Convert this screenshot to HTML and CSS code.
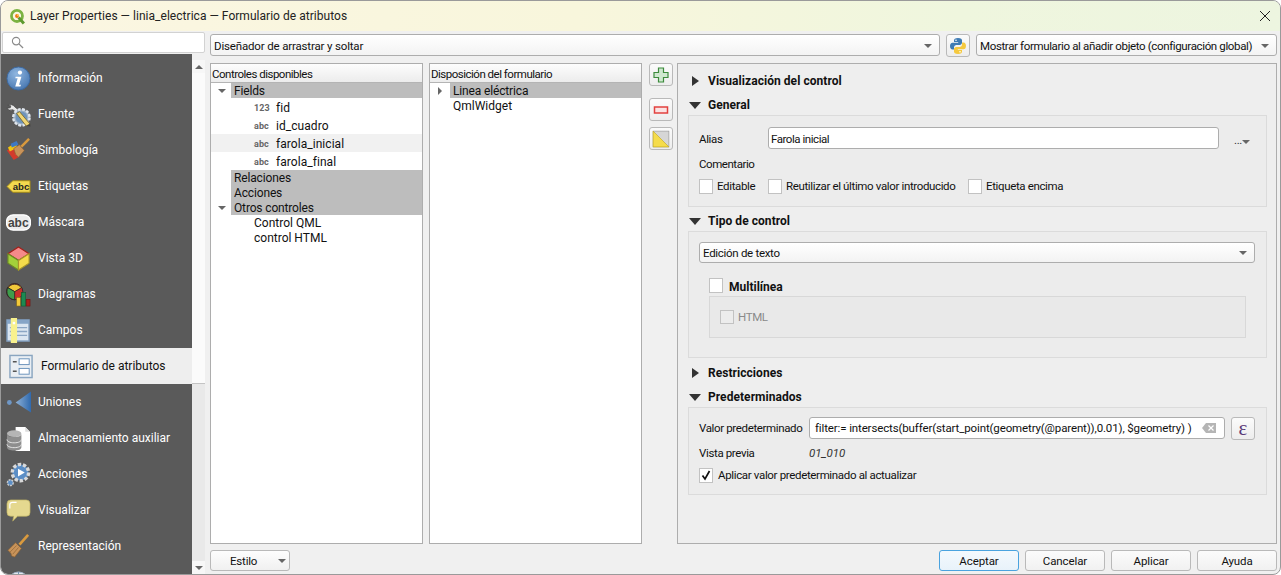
FILE: index.html
```html
<!DOCTYPE html>
<html lang="es">
<head>
<meta charset="utf-8">
<title>Layer Properties</title>
<link rel="stylesheet" href="styles.css">
</head>
<body>
<div class="window">
  <header class="titlebar">
    <svg class="qgis" viewBox="0 0 16 16"><circle cx="7.500" cy="7.500" r="5.200" fill="none" stroke="#7cb342" stroke-width="2.600"/><path d="M9 9l5 5.500" stroke="#5d9a2e" stroke-width="2.800"/><circle cx="7.500" cy="7.500" r="1.800" fill="#ee7913"/><path d="M7.500 5.700a1.800 1.800 0 0 1 1.800 1.800H7.500z" fill="#f5c242"/></svg>
    <span class="title-text">Layer Properties — linia_electrica — Formulario de atributos</span>
    <svg class="close" viewBox="0 0 12 12"><path d="M1 1l10 10M11 1L1 11" stroke="#222" stroke-width="1" fill="none"/></svg>
  </header>
  <div class="content">
    <aside class="left">
      <div class="search">
        <svg class="search-icon" viewBox="0 0 14 14"><circle cx="5.500" cy="5.500" r="4" fill="none" stroke="#8a8a8a" stroke-width="1.200"/><path d="M8.500 8.500l4.500 4.500" stroke="#8a8a8a" stroke-width="1.400"/></svg>
      </div>
      <div class="side-wrap">
        <nav class="sidebar">
          <div class="item">
            <svg class="icon" viewBox="0 0 26 26"><defs><radialGradient id="bl" cx=".4" cy=".3" r=".8"><stop offset="0" stop-color="#8fb6e0"/><stop offset="1" stop-color="#4272ad"/></radialGradient></defs><circle cx="13" cy="13" r="12" fill="url(#bl)" stroke="#3b689f"/><circle cx="14.500" cy="6.800" r="2.200" fill="#fff"/><path d="M10 11.200h6l-2.400 8.400h2l-.6 1.600H9.600l2.500-8.400h-2.400z" fill="#fff"/></svg>
            <span>Información</span>
          </div>
          <div class="item">
            <svg class="icon" viewBox="0 0 26 26"><path d="M2 3.500a5 5 0 0 1 7 1.500l5 4-2 2.500-5-3.500a5 5 0 0 1-6-1.500l3.500-.5.500-2z" fill="#e8e8e8" stroke="#444" stroke-width=".7"/><circle cx="16" cy="16" r="8.500" fill="#9fb2c6" stroke="#dfe5ec" stroke-width="2.500" stroke-dasharray="3 1.500"/><circle cx="16" cy="16" r="6" fill="#6f94bb"/><path d="M11 12l3-2 11 13-4 2z" fill="#f0d675" stroke="#6b5a22" stroke-width=".8"/><path d="M21 25l4-2 .5 2.500z" fill="#444"/></svg>
            <span>Fuente</span>
          </div>
          <div class="item">
            <svg class="icon" viewBox="0 0 26 26"><path d="M1 13l8-5 4 12-5 3z" fill="#d33b2c"/><path d="M2 10l8-5 2 5-8 4z" fill="#f1c40f"/><path d="M5 6l6-3 2 4-7 3z" fill="#3d78c4"/><path d="M8 11l6-4 5 6-6 7-3-3z" fill="#c8935a" stroke="#8c6233" stroke-width=".7"/><path d="M16 9l8-8" stroke="#d99a3e" stroke-width="2.600"/></svg>
            <span>Simbología</span>
          </div>
          <div class="item">
            <svg class="icon" viewBox="0 0 26 26"><path d="M1 13l6-6h18v12H7z" fill="#f3d94e" stroke="#a48a17"/><text x="7" y="17" class="abc-dark">abc</text></svg>
            <span>Etiquetas</span>
          </div>
          <div class="item">
            <svg class="icon" viewBox="0 0 26 26"><rect x="0.500" y="5" width="25" height="16" rx="7" fill="#ececec" stroke="#fff" stroke-width="1.200"/><text x="2" y="18" class="abc-big">abc</text></svg>
            <span>Máscara</span>
          </div>
          <div class="item">
            <svg class="icon" viewBox="0 0 26 26"><path d="M13 1l11 7-11 7L2 8z" fill="#f58a8a" stroke="#a3201a" stroke-width="1.200"/><path d="M2 8l11 7v10L2 18z" fill="#a3d13a" stroke="#6d8a26" stroke-width="1.200"/><path d="M24 8l-11 7v10l11-7z" fill="#f5dc4b" stroke="#a8962a" stroke-width="1.200"/></svg>
            <span>Vista 3D</span>
          </div>
          <div class="item">
            <svg class="icon" viewBox="0 0 26 26"><circle cx="9" cy="10" r="8.500" fill="#c9302c" stroke="#222" stroke-width=".8"/><path d="M9 10L2 6a8.500 8.500 0 0 1 14 0z" fill="#f3c93a" stroke="#222" stroke-width=".8"/><path d="M9 10v8.500A8.500 8.500 0 0 1 2 6z" fill="#3e9d4b" stroke="#222" stroke-width=".8"/><rect x="11" y="16" width="4" height="9" fill="#f3c93a" stroke="#7d6414" stroke-width=".6"/><rect x="16" y="11" width="4.500" height="14" fill="#1c8a52" stroke="#0f5a33" stroke-width=".6"/><rect x="21" y="18" width="4" height="7" fill="#a8201c" stroke="#6f1512" stroke-width=".6"/></svg>
            <span>Diagramas</span>
          </div>
          <div class="item">
            <svg class="icon" viewBox="0 0 26 26"><rect x="1" y="2" width="23" height="22" fill="#dbe6f1" stroke="#7f9cbc" stroke-width="1.500"/><rect x="1" y="2" width="23" height="4" fill="#86a5c7"/><path d="M11 10h11M11 14h11M11 18h11M4 10h4M4 14h4M4 18h4" stroke="#8ba6c4" stroke-width="1.400"/><rect x="5" y="0" width="6.500" height="26" fill="#f8f18e"/><rect x="7" y="4" width="2.500" height="2.500" fill="#fff"/></svg>
            <span>Campos</span>
          </div>
          <div class="item selected">
            <svg class="icon" viewBox="0 0 26 26"><rect x="1" y="1.500" width="23" height="23" fill="#e9eef3" stroke="#8aa5c0" stroke-width="1.500"/><rect x="10.500" y="5" width="10.500" height="6" fill="#fff" stroke="#6a92bb"/><rect x="10.500" y="15" width="10.500" height="6" fill="#fff" stroke="#6a92bb"/><path d="M4 8h4M4 18h4" stroke="#555" stroke-width="1.500"/></svg>
            <span>Formulario de atributos</span>
          </div>
          <div class="item">
            <svg class="icon" viewBox="0 0 26 26"><defs><linearGradient id="jn" x1="0" x2="1"><stop offset="0" stop-color="#8db0d6"/><stop offset="1" stop-color="#2f69ad"/></linearGradient></defs><circle cx="3.500" cy="13" r="2.500" fill="#6f97c6"/><path d="M26 1.500V23.500L10 13z" fill="url(#jn)"/></svg>
            <span>Uniones</span>
          </div>
          <div class="item">
            <svg class="icon" viewBox="0 0 26 26"><path d="M10 1h10l5 5v20H10z" fill="#fff"/><path d="M20 1v5h5" fill="#ddd"/><ellipse cx="8.500" cy="8" rx="7.500" ry="3.500" fill="#b5b5b5"/><path d="M1 8v14c0 2 3 3.500 7.500 3.500S16 24 16 22V8c0 2-3 3.500-7.500 3.500S1 10 1 8z" fill="#8e8e8e"/><path d="M1 14c0 2 3 3.500 7.500 3.500S16 16 16 14M1 19c0 2 3 3.500 7.500 3.500S16 21 16 19" fill="none" stroke="#e6e6e6"/></svg>
            <span>Almacenamiento auxiliar</span>
          </div>
          <div class="item">
            <svg class="icon" viewBox="0 0 26 26"><circle cx="15" cy="11" r="8.500" fill="#5b8ec6" stroke="#d9d9d9" stroke-width="3.500" stroke-dasharray="3.500 1.800"/><path d="M12.500 7l7 4-7 4z" fill="#fff"/><circle cx="4.500" cy="21.500" r="3" fill="#5b8ec6" stroke="#ccc" stroke-width="1.500" stroke-dasharray="2 1"/></svg>
            <span>Acciones</span>
          </div>
          <div class="item">
            <svg class="icon" viewBox="0 0 26 26"><path d="M5 2h16a4 4 0 0 1 4 4v9a4 4 0 0 1-4 4H12l-5 5 1-5H5a4 4 0 0 1-4-4V6a4 4 0 0 1 4-4z" fill="#e5d88f" stroke="#bcae5f" stroke-width=".7"/><path d="M4 11V7a2.500 2.500 0 0 1 2.500-2.500H11" fill="none" stroke="#fff" stroke-width="1.200"/></svg>
            <span>Visualizar</span>
          </div>
          <div class="item">
            <svg class="icon" viewBox="0 0 26 26"><path d="M2 17l8-8 6 6-7 9-3-1-1-3z" fill="#c8935a" stroke="#8c6233" stroke-width=".7"/><path d="M4 19l7-7M7 21l6-7" stroke="#8c6233" stroke-width=".7"/><path d="M14 11l9-10" stroke="#d99a3e" stroke-width="2.800"/></svg>
            <span>Representación</span>
          </div>
          <div class="item">
            <svg class="icon" viewBox="0 0 26 26"><circle cx="13" cy="13" r="11" fill="#e4e9ef" stroke="#9fb2c6"/><path d="M13 2v22M2 13h22M5 6h16" stroke="#6f8fb0"/></svg>
            <span></span>
          </div>
        </nav>
        <div class="vscroll">
          <div class="sbtn"><i class="tri-up"></i></div>
          <div class="thumb"></div>
          <div class="track"></div>
          <div class="sbtn"><i class="tri-down"></i></div>
        </div>
      </div>
    </aside>
    <main class="main">
      <div class="toprow">
        <div class="combo combo-wide"><span>Diseñador de arrastrar y soltar</span><i class="tri-down"></i></div>
        <button class="tool tool-py" type="button">
          <svg viewBox="0 0 18 18" width="18" height="18"><path d="M9 1C6 1 5 2 5 3.500V5h4.200v.7H3.500C2 5.700 1 7 1 9s1 3.500 2.500 3.500H5v-2C5 9 6 8 7.500 8h3.200C12 8 13 7 13 5.800V3.500C13 2 12 1 9 1z" fill="#3f7cb4"/><path d="M9 17c3 0 4-1 4-2.500V13H8.800v-.7h5.700c1.500 0 2.500-1.300 2.500-3.300s-1-3.500-2.500-3.500H13v2c0 1.500-1 2.500-2.500 2.500H7.300C6 10 5 11 5 12.200v2.300C5 16 6 17 9 17z" fill="#f5c93f"/><circle cx="7" cy="3.200" r=".8" fill="#fff"/><circle cx="11" cy="14.800" r=".8" fill="#fff"/></svg>
        </button>
        <div class="combo combo-right"><span>Mostrar formulario al añadir objeto (configuración global)</span><i class="tri-down"></i></div>
      </div>
      <div class="panels">
        <section class="tree tree-a">
          <div class="tree-head">Controles disponibles</div>
          <div class="row group"><i class="tri-down exp"></i><span class="cell">Fields</span></div>
          <div class="row field"><span class="ftype ftype-num">123</span>fid</div>
          <div class="row field"><span class="ftype">abc</span>id_cuadro</div>
          <div class="row field hover"><span class="ftype">abc</span>farola_inicial</div>
          <div class="row field"><span class="ftype">abc</span>farola_final</div>
          <div class="row group"><i class="noexp"></i><span class="cell">Relaciones</span></div>
          <div class="row group"><i class="noexp"></i><span class="cell">Acciones</span></div>
          <div class="row group"><i class="tri-down exp"></i><span class="cell">Otros controles</span></div>
          <div class="row leaf">Control QML</div>
          <div class="row leaf">control HTML</div>
        </section>
        <section class="tree tree-b">
          <div class="tree-head">Disposición del formulario</div>
          <div class="row group"><i class="tri-right exp"></i><span class="cell">Linea eléctrica</span></div>
          <div class="row layout-leaf">QmlWidget</div>
        </section>
        <div class="toolcol">
          <button class="tool" type="button"><svg viewBox="0 0 16 16" width="16" height="16"><path d="M5.500 1h5v4.500H15v5h-4.500V15h-5v-4.500H1v-5h4.500z" fill="#cfe8cf" stroke="#3d8b3d" stroke-width="1.200"/></svg></button>
          <button class="tool tool-minus" type="button"><svg viewBox="0 0 16 16" width="16" height="16"><rect x="1.500" y="5" width="13" height="6" fill="#fbe3e3" stroke="#e2413f" stroke-width="1.500"/></svg></button>
          <button class="tool" type="button"><svg viewBox="0 0 16 16" width="18" height="18"><rect x="1" y="1" width="14" height="14" fill="#d6d6d6" stroke="#999" stroke-width=".6"/><path d="M1 1l14 14H1z" fill="#f5dc4b" stroke="#c5ab20" stroke-width=".6"/></svg></button>
        </div>
        <section class="props">
          <div class="sec-head"><i class="caret-right"></i><span>Visualización del control</span></div>
          <div class="sec-head"><i class="caret-down"></i><span>General</span></div>
          <div class="box box-general">
            <div class="alias-row">
              <label class="alias-label">Alias</label>
              <div class="input alias-input">Farola inicial</div>
              <span class="more">...<i class="tri-down"></i></span>
            </div>
            <div class="comment">Comentario</div>
            <div class="checks">
              <div class="check check-a"><i class="cb"></i>Editable</div>
              <div class="check check-b"><i class="cb"></i>Reutilizar el último valor introducido</div>
              <div class="check"><i class="cb"></i>Etiqueta encima</div>
            </div>
          </div>
          <div class="sec-head"><i class="caret-down"></i><span>Tipo de control</span></div>
          <div class="box box-type">
            <div class="combo combo-edit"><span>Edición de texto</span><i class="tri-down"></i></div>
            <div class="multi"><i class="cb"></i><b>Multilínea</b></div>
            <div class="inner-box"><div class="check disabled"><i class="cb"></i>HTML</div></div>
          </div>
          <div class="sec-head sec-gap"><i class="caret-right"></i><span>Restricciones</span></div>
          <div class="sec-head"><i class="caret-down"></i><span>Predeterminados</span></div>
          <div class="box box-def">
            <div class="def-row">
              <label class="def-label">Valor predeterminado</label>
              <div class="input def-input"><span>filter:= intersects(buffer(start_point(geometry(@parent)),0.01), $geometry) )</span>
                <svg class="clear" viewBox="0 0 14 10" width="14" height="10"><path d="M4 0h10v10H4L0 5z" fill="#b5b5b5"/><path d="M6.500 2.500l5 5M11.500 2.500l-5 5" stroke="#fff" stroke-width="1.200"/></svg>
              </div>
              <button class="tool eps" type="button">ε</button>
            </div>
            <div class="preview"><label class="def-label">Vista previa</label><em>01_010</em></div>
            <div class="check apply"><i class="cb on"><svg viewBox="0 0 12 12" width="12" height="12"><path d="M2.500 6.500l2.500 3.500 4.500-8" fill="none" stroke="#111" stroke-width="1.700"/></svg></i>Aplicar valor predeterminado al actualizar</div>
          </div>
        </section>
      </div>
      <footer class="bottom">
        <div class="style-btn"><span>Estilo</span><i class="tri-down"></i></div>
        <div class="actions">
          <button class="btn default" type="button">Aceptar</button>
          <button class="btn" type="button">Cancelar</button>
          <button class="btn" type="button">Aplicar</button>
          <button class="btn" type="button">Ayuda</button>
        </div>
      </footer>
    </main>
  </div>
</div>
</body>
</html>
```

FILE: styles.css
```css
* { box-sizing: border-box; }
html, body { margin: 0; height: 575px; overflow: hidden; background: #fff; }
body { font: 11.500px/16px Roboto, "Open Sans", sans-serif; color: #111; }
i { display: block; font-style: normal; }
button { font: inherit; color: inherit; padding: 0; }

.window { height: 575px; border: 1px solid #9a9a9a; border-radius: 8px; background: #f0f0f0; overflow: hidden; display: flex; flex-direction: column; }
.titlebar { flex: 0 0 30px; display: flex; align-items: center; padding: 0 9px 0 8px; background: linear-gradient(90deg, #fbf6e2 0%, #f8f6dc 45%, #eff6de 75%, #edf5e0 100%); }
.qgis { width: 17px; height: 17px; flex: none; }
.title-text { margin-left: 4px; flex: 1; color: #222; font-size: 12px; letter-spacing: .03px; }
.close { width: 12px; height: 12px; }

.content { flex: 1; display: flex; min-height: 0; }
.left { width: 204px; flex: none; display: flex; flex-direction: column; }
.search { height: 21px; margin: 1px 0 1px 1px; background: #fff; border: 1px solid #d2d2d2; border-radius: 2px; padding: 3px 0 0 8px; }
.search-icon { display: block; width: 13px; height: 13px; }
.side-wrap { flex: 1; display: flex; min-height: 0; }
.sidebar { width: 191px; flex: none; background: #5a5a5a; padding: 6px 0 0; overflow: hidden; border-bottom-left-radius: 6px; font-size: 12px; }
.item { height: 36px; display: flex; align-items: center; gap: 7px; padding-left: 5px; color: #fff; white-space: nowrap; }
.item .icon { width: 25px; height: 25px; flex: none; }
.item.selected { background: #eeeeee; color: #111; padding-left: 8px; }
.abc-dark { font: 700 10px "Liberation Sans", sans-serif; fill: #222; }
.abc-big { font: 700 12.500px "Liberation Sans", sans-serif; fill: #444; }

.vscroll { width: 13px; flex: none; display: flex; flex-direction: column; padding-top: 6px; background: #f0f0f0; }
.sbtn { height: 13px; flex: none; display: flex; align-items: center; justify-content: center; background: #f7f7f7; }
.thumb { height: 311px; flex: none; background: #fbfbfb; border-bottom: 1px solid #c4c4c4; }
.track { flex: 1; background: #e9e9e9; }

.tri-down, .tri-up, .tri-right { width: 0; height: 0; flex: none; }
.tri-down { border-left: 4px solid transparent; border-right: 4px solid transparent; border-top: 4px solid #666; }
.tri-up { border-left: 4px solid transparent; border-right: 4px solid transparent; border-bottom: 4px solid #666; }
.tri-right { border-top: 4px solid transparent; border-bottom: 4px solid transparent; border-left: 4px solid #666; }

.main { flex: 1; min-width: 0; padding: 3px 3px 3px 5px; display: flex; flex-direction: column; }
.toprow { height: 23px; flex: none; display: flex; gap: 6px; margin-bottom: 6px; }
.combo { height: 22px; display: flex; align-items: center; justify-content: space-between; padding: 1px 7px 0 3px; background: linear-gradient(#fff, #f3f3f3); border: 1px solid #adadad; border-radius: 3px; white-space: nowrap; }
.combo-wide { width: 730px; letter-spacing: -.16px; }
.combo-right { flex: 1; min-width: 0; letter-spacing: -.36px; }
.tool { width: 24px; height: 23px; display: flex; align-items: center; justify-content: center; background: linear-gradient(#fbfbfb, #ededed); border: 1px solid #b9b9b9; border-radius: 3px; flex: none; }

.panels { flex: 1; min-height: 0; display: flex; }
.tree { width: 213px; flex: none; background: #fff; border: 1px solid #adadad; }
.tree-a { margin-right: 6px; }
.tree-b { margin-right: 7px; }
.tree-head { height: 19px; padding-left: 1px; line-height: 20px; letter-spacing: -.5px; background: linear-gradient(#fdfdfd, #ececec); border-bottom: 1px solid #b4b4b4; }
.row { height: 15px; line-height: 16px; display: flex; align-items: center; white-space: nowrap; font-size: 12px; }
.group .exp { margin-left: 7px; }
.group .tri-down { margin-right: 5px; }
.group .tri-right { margin-left: 8px; margin-right: 8px; }
.noexp { width: 20px; flex: none; }
.cell { flex: 1; align-self: stretch; padding-left: 3px; background: #bdbdbd; letter-spacing: -.15px; }
.field { height: 18px; padding: 1px 0 0 43px; gap: 6px; letter-spacing: .05px; }
.hover { background: #f1f1f1; }
.ftype { width: 16px; font-size: 9px; font-weight: 700; color: #666; letter-spacing: .1px; }
.leaf { padding-left: 43px; }
.layout-leaf { padding-left: 23px; }

.toolcol { width: 24px; flex: none; margin-right: 4px; display: flex; flex-direction: column; }
.tool-minus { margin: 12px 0 6px; }

.props { flex: 1; min-width: 0; background: #eee; border: 1px solid #adadad; padding: 7px 9px 0 10px; }
.sec-head { height: 20px; margin-bottom: 4px; display: flex; align-items: center; font-weight: 700; color: #111; font-size: 12px; letter-spacing: .05px; }
.sec-head span { margin-left: 7px; }
.box + .sec-head { margin-top: 4px; }
.sec-head.sec-gap { margin-top: 5px; }
.sec-head:has(+ .box) { margin-bottom: 0; }
.caret-right, .caret-down { width: 13px; flex: none; }
.caret-right { height: 10px; }
.caret-right::before { content: ""; display: block; width: 0; height: 0; margin-left: 4px; border-top: 5px solid transparent; border-bottom: 5px solid transparent; border-left: 7px solid #333; }
.caret-down::before { content: ""; display: block; width: 0; height: 0; margin: 1px 0 0 1px; border-left: 6px solid transparent; border-right: 6px solid transparent; border-top: 7px solid #333; }

.box { background: #ececec; border: 1px solid #dbdbdb; letter-spacing: -.36px; }
.box-general { height: 92px; padding: 11px 10px 0; }
.alias-row { display: flex; align-items: center; height: 22px; padding-top: 0; }
.alias-label { width: 69px; flex: none; padding-top: 1px; }
.input { height: 22px; padding: 1px 2px 0; display: flex; align-items: center; background: #fff; border: 1px solid #adadad; border-radius: 3px; }
.alias-input { width: 451px; letter-spacing: -.45px; }
.more { display: flex; align-items: center; margin-left: 15px; color: #333; padding-top: 4px; }
.more .tri-down { margin-top: 4px; }
.comment { margin-top: 7px; letter-spacing: -.45px; }
.checks { display: flex; margin-top: 6px; }
.check { display: flex; align-items: center; gap: 4px; white-space: nowrap; }
.check-a { width: 69px; }
.check-b { width: 200px; }
.cb { width: 14px; height: 15px; flex: none; background: #fff; border: 1px solid #c2c2c2; display: flex; align-items: center; justify-content: center; }

.box-type { height: 127px; padding: 10px 11px 0 10px; }
.combo-edit { height: 21px; letter-spacing: -.3px; }
.multi { display: flex; align-items: center; gap: 6px; margin: 15px 0 0 10px; height: 15px; font-size: 12px; letter-spacing: 0; }
.multi b { padding-top: 2px; }
.inner-box { height: 42px; margin: 3px 9px 0 10px; background: #e9e9e9; border: 1px solid #d8d8d8; padding: 12px 0 0 10px; }
.disabled { color: #8a8a8a; }
.disabled .cb { background: #ececec; height: 14px; }

.box-def { height: 88px; padding: 9px 11px 0 10px; }
.def-row { display: flex; align-items: center; height: 22px; }
.def-label { width: 110px; flex: none; white-space: nowrap; }
.def-input { width: 416px; justify-content: space-between; padding: 0 8px 0 5px; white-space: nowrap; letter-spacing: -.13px; }
.clear { flex: none; }
.eps { margin-left: 6px; height: 23px; font: 21px "Liberation Serif", serif; color: #5a3a78; letter-spacing: 0; }
.preview { display: flex; margin-top: 6px; height: 16px; align-items: center; }
.preview em { color: #333; letter-spacing: 0; }
.apply { margin-top: 6px; gap: 5px; letter-spacing: -.34px; }

.bottom { height: 21px; flex: none; margin-top: 6px; display: flex; justify-content: space-between; }
.style-btn { width: 80px; display: flex; align-items: center; justify-content: space-between; padding: 0 3px 0 19px; background: linear-gradient(#fdfdfd, #f0f0f0); border: 1px solid #b9b9b9; border-radius: 3px; letter-spacing: -.2px; }
.actions { display: flex; gap: 6px; }
.btn { width: 80px; height: 21px; background: linear-gradient(#fbfbfb, #f1f1f1); border: 1px solid #b9b9b9; border-radius: 3px; letter-spacing: -.1px; }
.btn.default { border-color: #4aa3df; background: linear-gradient(#f4f9fd, #e8f2fa); }
```
